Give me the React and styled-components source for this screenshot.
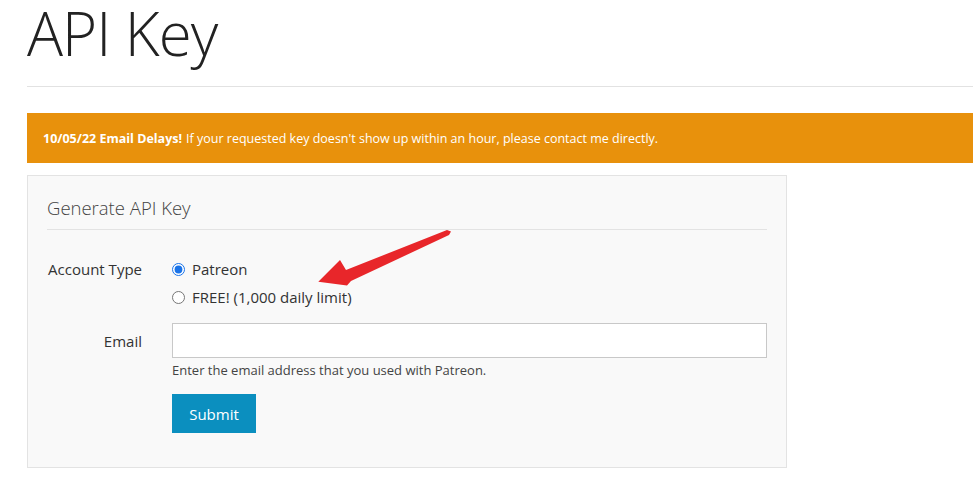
import React, { useState } from 'react'
import styled, { createGlobalStyle } from 'styled-components'

const GlobalStyle = createGlobalStyle`
  body {
    margin: 0;
    background: #fff;
    font-family: "Open Sans", "Liberation Sans", sans-serif;
    color: #333;
  }
`

function App() {
  const [type, setType] = useState('patreon')
  return (
    <Page>
      <GlobalStyle />
      <Title>API Key</Title>
      <Rule />
      <Alert>
        <strong>10/05/22 Email Delays!</strong> If your requested key doesn't show up within an hour, please contact me directly.
      </Alert>
      <Panel>
        <Legend>Generate API Key</Legend>
        <Row>
          <Label>Account Type</Label>
          <Field>
            <RadioLine>
              <input type="radio" name="type" checked={type === 'patreon'} onChange={() => setType('patreon')} />
              Patreon
            </RadioLine>
            <RadioLine>
              <input type="radio" name="type" checked={type === 'free'} onChange={() => setType('free')} />
              FREE! (1,000 daily limit)
            </RadioLine>
          </Field>
        </Row>
        <Row top={8}>
          <Label pad={8}>Email</Label>
          <Field>
            <Input type="email" />
            <Help>Enter the email address that you used with Patreon.</Help>
            <Button>Submit</Button>
          </Field>
        </Row>
        <Arrow width="136" height="60" viewBox="0 0 136 60">
          <polygon
            points="0.3,53.7 22,32 28,42 129,2 133,3.5 131,7 33,53 29,57.5"
            fill="#e8262a"
            strokeLinejoin="round"
          />
        </Arrow>
      </Panel>
    </Page>
  )
}

export default App

const Page = styled.div`
  padding: 0 0 20px 27px;
`

const Title = styled.h1`
  margin: 0;
  font-size: 60px;
  font-weight: 300;
  line-height: 66px;
  color: #222;
  letter-spacing: -1px;
`

const Rule = styled.div`
  margin-top: 20px;
  height: 1px;
  background: #e2e2e2;
`

const Alert = styled.div`
  margin-top: 26px;
  height: 50px;
  display: flex;
  align-items: center;
  padding-left: 16px;
  background: #e8910c;
  color: #fff;
  font-size: 12.5px;
  strong {
    font-weight: 700;
    margin-right: 4px;
  }
`

const Panel = styled.div`
  position: relative;
  margin-top: 12px;
  box-sizing: border-box;
  width: 760px;
  height: 293px;
  padding: 0 19px;
  background: #f9f9f9;
  border: 1px solid #e3e3e3;
`

const Legend = styled.div`
  margin-top: 19px;
  padding-bottom: 8px;
  font-size: 18.5px;
  font-weight: 300;
  color: #444;
  border-bottom: 1px solid #e3e3e3;
  line-height: 26px;
`

const Row = styled.div`
  display: flex;
  margin-top: ${p => p.top ?? 29}px;
`

const Label = styled.div`
  width: 95px;
  flex-shrink: 0;
  text-align: right;
  font-size: 15px;
  color: #333;
  padding-top: ${p => p.pad ?? 0}px;
  line-height: 20px;
`

const Field = styled.div`
  margin-left: 30px;
  flex: 1;
  display: flex;
  flex-direction: column;
  align-items: flex-start;
`

const RadioLine = styled.label`
  display: flex;
  align-items: center;
  height: 20px;
  margin-bottom: 8px;
  font-size: 15px;
  color: #333;
  input {
    margin: 0 7px 0 0;
    width: 13px;
    height: 13px;
    accent-color: #1a73e8;
  }
`

const Input = styled.input`
  box-sizing: border-box;
  width: 100%;
  height: 35px;
  border: 1px solid #c8c8c8;
  background: #fff;
  outline: none;
`

const Help = styled.div`
  margin-top: 3px;
  font-size: 13px;
  color: #444;
  line-height: 18px;
`

const Button = styled.button`
  margin-top: 15px;
  width: 84px;
  height: 39px;
  border: none;
  background: #0b8fbf;
  color: #fff;
  font-family: "Open Sans", "Liberation Sans", sans-serif;
  font-size: 15px;
`

const Arrow = styled.svg`
  position: absolute;
  left: 290px;
  top: 52px;
`
